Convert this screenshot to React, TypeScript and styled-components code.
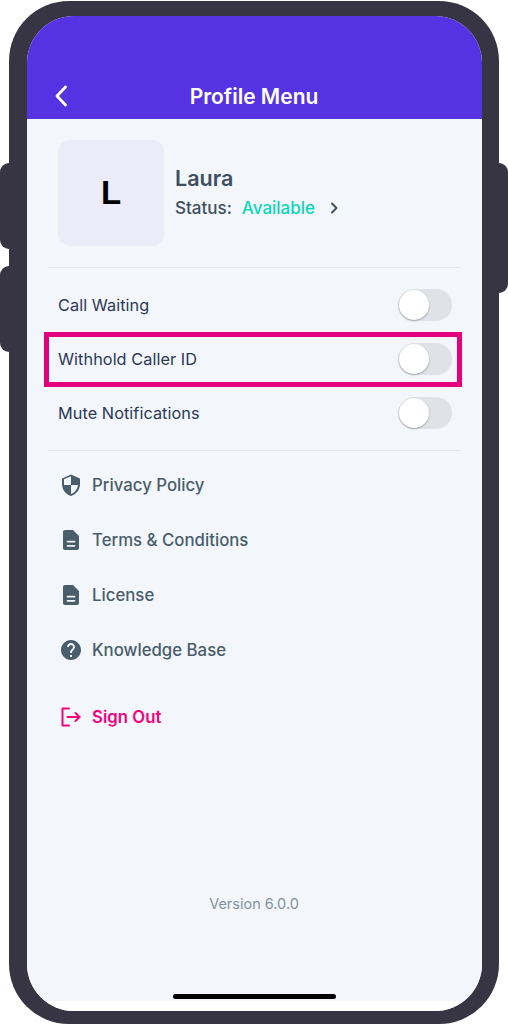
import React from 'react'
import styled, { createGlobalStyle } from 'styled-components'

const GlobalStyle = createGlobalStyle`
  html, body {
    margin: 0;
    padding: 0;
    background: #fff;
  }

  body {
    font-family: Inter, 'Noto Sans', sans-serif;
    overflow: hidden;
  }
`

const settings = [
  { label: 'Call Waiting' },
  { label: 'Withhold Caller ID', highlighted: true },
  { label: 'Mute Notifications' },
]

const links = [
  { label: 'Privacy Policy', icon: <ShieldIcon /> },
  { label: 'Terms & Conditions', icon: <DocIcon /> },
  { label: 'License', icon: <DocIcon /> },
  { label: 'Knowledge Base', icon: <HelpIcon /> },
]

export default function App() {
  return (
    <Page>
      <GlobalStyle />
      <Phone>
        <VolumeUp />
        <VolumeDown />
        <PowerKey />
        <Screen>
          <Header>
            <BackButton>
              <svg width="14" height="22" viewBox="0 0 14 22" fill="none">
                <path d="M11.5 2 L3 11 L11.5 20" stroke="#fff" strokeWidth="2.8" strokeLinecap="round" strokeLinejoin="round" />
              </svg>
            </BackButton>
            <Title>Profile Menu</Title>
          </Header>

          <Body>
            <Profile>
              <Avatar>L</Avatar>
              <ProfileText>
                <Name>Laura</Name>
                <StatusLine>
                  Status:
                  <Available>Available</Available>
                  <svg width="9" height="12" viewBox="0 0 9 12" fill="none">
                    <path d="M2 1.5 L6.5 6 L2 10.5" stroke="#3E5060" strokeWidth="2" strokeLinecap="round" strokeLinejoin="round" />
                  </svg>
                </StatusLine>
              </ProfileText>
            </Profile>

            <Divider />

            <Settings>
              {settings.map(s => (
                <SettingRow key={s.label} $highlighted={s.highlighted}>
                  <SettingLabel>{s.label}</SettingLabel>
                  <Toggle>
                    <Knob />
                  </Toggle>
                </SettingRow>
              ))}
            </Settings>

            <Divider />

            <Links>
              {links.map(l => (
                <LinkRow key={l.label}>
                  <IconSlot>{l.icon}</IconSlot>
                  {l.label}
                </LinkRow>
              ))}
            </Links>

            <SignOut>
              <IconSlot>
                <SignOutIcon />
              </IconSlot>
              Sign Out
            </SignOut>

            <Version>Version 6.0.0</Version>
            <HomeBar />
          </Body>
          <BottomStrip />
        </Screen>
      </Phone>
    </Page>
  )
}

function ShieldIcon() {
  return (
    <svg width="24" height="24" viewBox="0 0 24 24" fill="#4A5D6B">
      <path d="M12 1.5L3.6 5.2c-.4.2-.6.5-.6.9V11c0 5.55 3.84 10.74 9 12 5.16-1.26 9-6.45 9-12V6.100c0-.4-.2-.7-.6-.9L12 1.500zm0 10.490h7c-.53 4.120-3.280 7.790-7 8.940V12H5V6.300l7-3.110v8.800z" />
    </svg>
  )
}

function DocIcon() {
  return (
    <svg width="26" height="26" viewBox="0 0 24 24" fill="#4A5D6B">
      <path d="M14 2H6c-1.100 0-1.990.9-1.990 2L4 20c0 1.100.89 2 1.990 2H18c1.100 0 2-.9 2-2V8l-6-6zm1.500 16.700h-7a.85.85 0 0 1 0-1.700h7a.85.85 0 0 1 0 1.700zm0-4.300h-7a.85.85 0 0 1 0-1.700h7a.85.85 0 0 1 0 1.700z" />
    </svg>
  )
}

function HelpIcon() {
  return (
    <svg width="26" height="26" viewBox="0 0 24 24" fill="#4A5D6B">
      <path d="M12 2C6.480 2 2 6.480 2 12s4.480 10 10 10 10-4.480 10-10S17.520 2 12 2zm1 17h-2v-2h2v2zm2.070-7.750l-.9.920C13.450 12.900 13 13.500 13 15h-2v-.5c0-1.100.45-2.100 1.170-2.830l1.240-1.260c.37-.36.59-.86.59-1.410 0-1.100-.9-2-2-2s-2 .9-2 2H8c0-2.210 1.790-4 4-4s4 1.790 4 4c0 .88-.36 1.680-.93 2.250z" />
    </svg>
  )
}

function SignOutIcon() {
  return (
    <svg width="24" height="24" viewBox="0 0 24 24" fill="none" stroke="#F5007F" strokeWidth="2" strokeLinecap="round" strokeLinejoin="round">
      <path d="M10 3.500H3.500v17H10" />
      <path d="M8.500 12H20.500" />
      <path d="M16.500 8l4 4-4 4" />
    </svg>
  )
}

const Page = styled.div`
  width: 508px;
  height: 1024px;
  box-sizing: border-box;
  padding: 1px 9px 0;
  overflow: hidden;
`

const Phone = styled.div`
  position: relative;
  height: 1023px;
  box-sizing: border-box;
  padding: 15px 17.500px 13px;
  background: #373544;
  border-radius: 60px;
`

const SideKey = styled.div`
  position: absolute;
  width: 9px;
  background: #373544;
`

const VolumeUp = styled(SideKey)`
  left: -9px;
  top: 162px;
  height: 86px;
  border-radius: 9px 0 0 9px;
`

const VolumeDown = styled(SideKey)`
  left: -9px;
  top: 265px;
  height: 86px;
  border-radius: 9px 0 0 9px;
`

const PowerKey = styled(SideKey)`
  right: -9px;
  top: 162px;
  height: 130px;
  border-radius: 0 9px 9px 0;
`

const Screen = styled.div`
  height: 100%;
  display: flex;
  flex-flow: column;
  background: #fff;
  border-radius: 47px;
  overflow: hidden;
`

const Header = styled.header`
  position: relative;
  flex-shrink: 0;
  height: 103px;
  box-sizing: border-box;
  padding-bottom: 8px;
  display: flex;
  align-items: flex-end;
  justify-content: center;
  background: #5533e2;
`

const BackButton = styled.div`
  position: absolute;
  left: 27px;
  bottom: 12px;
  display: flex;
`

const Title = styled.h1`
  margin: 0;
  font-size: 21px;
  line-height: 28px;
  font-weight: 600;
  color: #fff;
`

const Body = styled.main`
  flex: 1;
  display: flex;
  flex-flow: column;
  padding: 21px 21.500px 0;
  background: #f3f6fa;
`

const BottomStrip = styled.div`
  flex-shrink: 0;
  height: 10px;
  background: #fff;
`

const Profile = styled.section`
  display: flex;
  align-items: center;
  gap: 11px;
  padding-left: 10px;
  margin-bottom: 21px;
`

const Avatar = styled.div`
  width: 106px;
  height: 106px;
  display: flex;
  align-items: center;
  justify-content: center;
  background: #ececf8;
  border-radius: 12px;
  font-family: 'Liberation Sans', Arial, sans-serif;
  font-size: 33px;
  font-weight: 700;
  color: #000;
`

const ProfileText = styled.div`
  display: flex;
  flex-flow: column;
  gap: 7px;
  margin-top: -4px;
`

const Name = styled.div`
  font-size: 21.500px;
  line-height: 26px;
  font-weight: 600;
  color: #3e5060;
`

const StatusLine = styled.div`
  display: flex;
  align-items: center;
  font-size: 17px;
  line-height: 20px;
  font-weight: 500;
  color: #3e5060;

  svg {
    margin-left: 15px;
  }
`

const Available = styled.span`
  margin-left: 10px;
  color: #0bd6b8;
`

const Divider = styled.hr`
  margin: 0;
  border: 0;
  height: 1px;
  background: #e2e6f2;
`

const Settings = styled.section`
  display: flex;
  flex-flow: column;
  padding: 10px 0 10px;
`

const SettingRow = styled.div<{ $highlighted?: boolean }>`
  position: relative;
  height: 54px;
  display: flex;
  align-items: center;
  justify-content: space-between;
  padding: 0 8.500px 0 10px;

  ${p =>
    p.$highlighted &&
    `
    &::after {
      content: '';
      position: absolute;
      left: -4px;
      right: -1.500px;
      top: 0;
      height: 55px;
      box-sizing: border-box;
      border: 5px solid #e5007d;
    }
  `}
`

const SettingLabel = styled.span`
  font-size: 16.300px;
  letter-spacing: 0.05px;
  color: #2c3858;
`

const Toggle = styled.div`
  width: 54px;
  height: 32px;
  background: #dfe3e8;
  border-radius: 16px;
`

const Knob = styled.div`
  width: 30px;
  height: 30px;
  margin: 1px;
  background: #fff;
  border-radius: 50%;
  box-shadow: 0 1px 2px rgba(0, 0, 0, 0.3);
`

const Links = styled.nav`
  display: flex;
  flex-flow: column;
  padding-top: 6px;
`

const LinkRow = styled.div`
  height: 55px;
  display: flex;
  align-items: center;
  gap: 9px;
  padding-left: 11px;
  font-size: 16.800px;
  font-weight: 550;
  color: #4a5d6b;
`

const IconSlot = styled.span`
  width: 24px;
  height: 24px;
  display: flex;
  align-items: center;
  justify-content: center;
`

const SignOut = styled(LinkRow)`
  margin-top: 12px;
  font-weight: 600;
  color: #f5007f;
`

const Version = styled.div`
  margin-top: 150px;
  text-align: center;
  font-size: 14.500px;
  line-height: 20px;
  color: #8593a1;
`

const HomeBar = styled.div`
  width: 163px;
  height: 5px;
  margin: 80px auto 0;
  background: #000;
  border-radius: 3px;
`
